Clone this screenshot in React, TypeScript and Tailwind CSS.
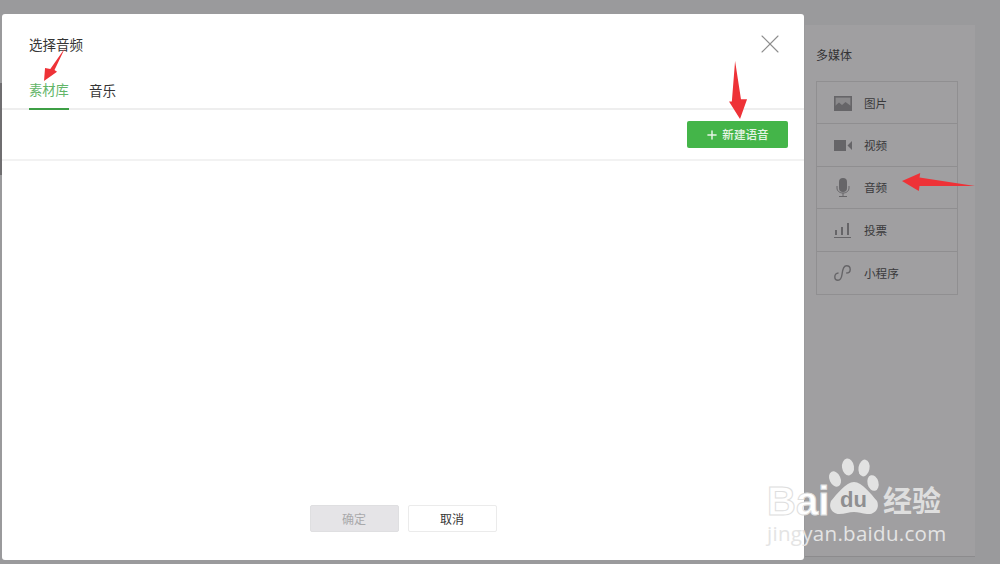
import { X, Plus } from "lucide-react"

const cjk = { fontFamily: '"Noto Sans CJK SC", "Noto Sans", sans-serif' }
const latin = { fontFamily: '"Liberation Sans", sans-serif' }

const Arrow = ({ points, className }: { points: string; className: string }) => (
    <svg className={className} viewBox="0 0 100 100" preserveAspectRatio="none">
        <polygon points={points} fill="#ee3237" />
    </svg>
)

const MediaRow = ({ icon, label, last }: { icon: React.ReactNode; label: string; last?: boolean }) => (
    <div className={`flex h-[42.4px] items-center pt-[1px] ${last ? "" : "border-b border-[#8f8e90]"}`}>
        <div className="flex w-[47px] justify-center pl-[4px]">{icon}</div>
        <div className="text-[11.6px] text-[#3a3a3c]">{label}</div>
    </div>
)

const SidePanel = () => (
    <div className="ml-[803px] mt-[25px] h-[532px] w-[170px] border-b border-[#8c8b8d] bg-[#a09fa1] pl-[11px] pt-[22px]">
        <div className="text-[12px] leading-[16px] text-[#333335]">多媒体</div>
        <div className="mt-[18px] w-[142px] border border-[#908f91]">
            <MediaRow
                label="图片"
                icon={
                    <svg width="18" height="15" viewBox="0 0 18 15">
                        <rect x="0.8" y="0.8" width="16.4" height="13.4" fill="#8b8a8c" stroke="#666568" strokeWidth="1.6" />
                        <path d="M1 14V10L5 6.5L8 9L11.5 6L17 10V14Z" fill="#666568" />
                    </svg>
                }
            />
            <MediaRow
                label="视频"
                icon={
                    <svg width="18" height="11" viewBox="0 0 18 11">
                        <rect width="12" height="11" fill="#666568" />
                        <path d="M13.5 5.5L18 1V10Z" fill="#666568" />
                    </svg>
                }
            />
            <MediaRow
                label="音频"
                icon={
                    <svg width="14" height="19" viewBox="0 0 14 19">
                        <rect x="3" y="0" width="8" height="14" rx="4" fill="#666568" />
                        <path d="M1 8V10C1 13 3.5 15 7 15C10.5 15 13 13 13 10V8" fill="none" stroke="#666568" />
                        <path d="M7 15V18M3 18.5H11" stroke="#666568" />
                    </svg>
                }
            />
            <MediaRow
                label="投票"
                icon={
                    <svg width="17" height="16" viewBox="0 0 17 16">
                        <path d="M2 8V13M8 5V13M14 1V13" stroke="#666568" strokeWidth="2" />
                        <path d="M0 15.5H17" stroke="#666568" />
                    </svg>
                }
            />
            <MediaRow
                last
                label="小程序"
                icon={
                    <svg width="17" height="16" viewBox="0 0 17 16" fill="none">
                        <path
                            d="M4.5 8C2 8 0.8 10 0.8 12C0.8 14 2.2 15.2 4 15.2C6.5 15.2 7.5 13 8 9.5C8.5 5 9.5 0.8 12.5 0.8C14.8 0.8 16.2 2.4 16.2 4.4C16.2 6.5 14.5 8 12.2 8"
                            stroke="#666568"
                            strokeWidth="1.4"
                        />
                    </svg>
                }
            />
        </div>
    </div>
)

const Modal = () => (
    <div className="absolute left-[2px] top-[14px] flex h-[546px] w-[802px] flex-col rounded-[3px] bg-white">
        <div className="flex items-start justify-between pl-[27px] pr-[18px] pt-[20px]">
            <div className="text-[13.5px] leading-[20px] text-[#353535]">选择音频</div>
            <X className="-mt-[6px] text-[#8d8d8d]" size={32} strokeWidth={0.8} />
        </div>
        <div className="mt-[4px] flex h-[46px] items-end gap-[20px] border-b-2 border-[#eeeeee] pl-[27px]">
            <div className="-mb-[2px] w-[40px] border-b-2 border-[#3d9f45] pb-[9px] text-[13.3px] leading-[18px] text-[#62b568]">素材库</div>
            <div className="pb-[9px] text-[13.5px] leading-[18px] text-[#353535]">音乐</div>
        </div>
        <div className="flex h-[51px] items-center justify-end border-b-2 border-[#f2f2f2] pr-[16px]">
            <div className="flex h-[27px] w-[101px] items-center justify-center gap-[3px] rounded-[2px] bg-[#44b549] pr-[1px] text-[11.6px] font-medium text-[#e6f4e6]">
                <Plus size={14} strokeWidth={2.5} />
                新建语音
            </div>
        </div>
        <div className="flex flex-1 items-end justify-center gap-[9px] pb-[28px]">
            <div className="flex h-[27px] w-[89px] items-center justify-center rounded-[2px] border border-[#dfdfe1] bg-[#e5e4e7] text-[12px] text-[#a9a9ab]">确定</div>
            <div className="flex h-[27px] w-[89px] items-center justify-center rounded-[2px] border border-[#ebebeb] bg-white text-[12px] text-[#353535]">取消</div>
        </div>
    </div>
)

const Watermark = () => (
    <div className="absolute left-[767px] top-[457px] h-[90px] w-[190px]">
        <svg className="absolute left-0 top-0" width="120" height="60" viewBox="0 0 120 60">
            <g fill="#e2e2e2">
                <ellipse cx="81" cy="10" rx="6" ry="8.5" transform="rotate(-8 81 10)" />
                <ellipse cx="97" cy="11" rx="5.5" ry="8.5" transform="rotate(10 97 11)" />
                <ellipse cx="68" cy="22" rx="5.5" ry="8" transform="rotate(-25 68 22)" />
                <ellipse cx="106" cy="26" rx="5.5" ry="8" transform="rotate(-15 106 26)" />
                <path d="M87 25C95 25 104 37 110 44C113 51 108 58 100 57C95 56.5 91 55 87 55C82 55 78 57 72 57C66 57 61 51 64 44C70 37 79 25 87 25Z" />
            </g>
        </svg>
        <div
            className="absolute left-0 top-[21px] text-[40px] font-bold leading-[46px]"
            style={{ ...latin, WebkitTextStroke: "1px #dedede", color: "#ffffff" }}
        >
            Bai
        </div>
        <div className="absolute left-[73px] top-[32px] text-[22px] font-bold leading-[22px] text-[#8f8f91]" style={latin}>du</div>
        <div className="absolute left-[116px] top-[24px] text-[29px] font-bold leading-[36px] text-[#dedede]" style={cjk}>经验</div>
        <div className="absolute left-0 top-[62px] text-[20.5px] leading-[28px] tracking-[0.3px] text-[#e4e4e4]" style={{ fontFamily: '"Open Sans", sans-serif' }}>
            jingyan.baidu.com
        </div>
    </div>
)

export default function App() {
    return (
        <div className="relative flex h-[564px] w-[1000px] overflow-hidden bg-[#9a9a9c]" style={cjk}>
            <div className="mt-[83px] h-[92px] w-[2px] bg-[#6f6e70]" />
            <SidePanel />
            <Modal />
            <Watermark />
            {/* red annotation arrows */}
            <Arrow className="absolute left-[44px] top-[47px] h-[34px] w-[21px]" points="100,3 50,68 62,73 0,100 5,62 30,65" />
            <Arrow className="absolute left-[729px] top-[61px] h-[58px] w-[19px]" points="32,0 63,66 95,66 58,100 0,70 15,70" />
            <Arrow className="absolute left-[902px] top-[173px] h-[18px] w-[73px]" points="0,44 25,0 24,25 100,72 24,72 23,100" />
        </div>
    )
}
